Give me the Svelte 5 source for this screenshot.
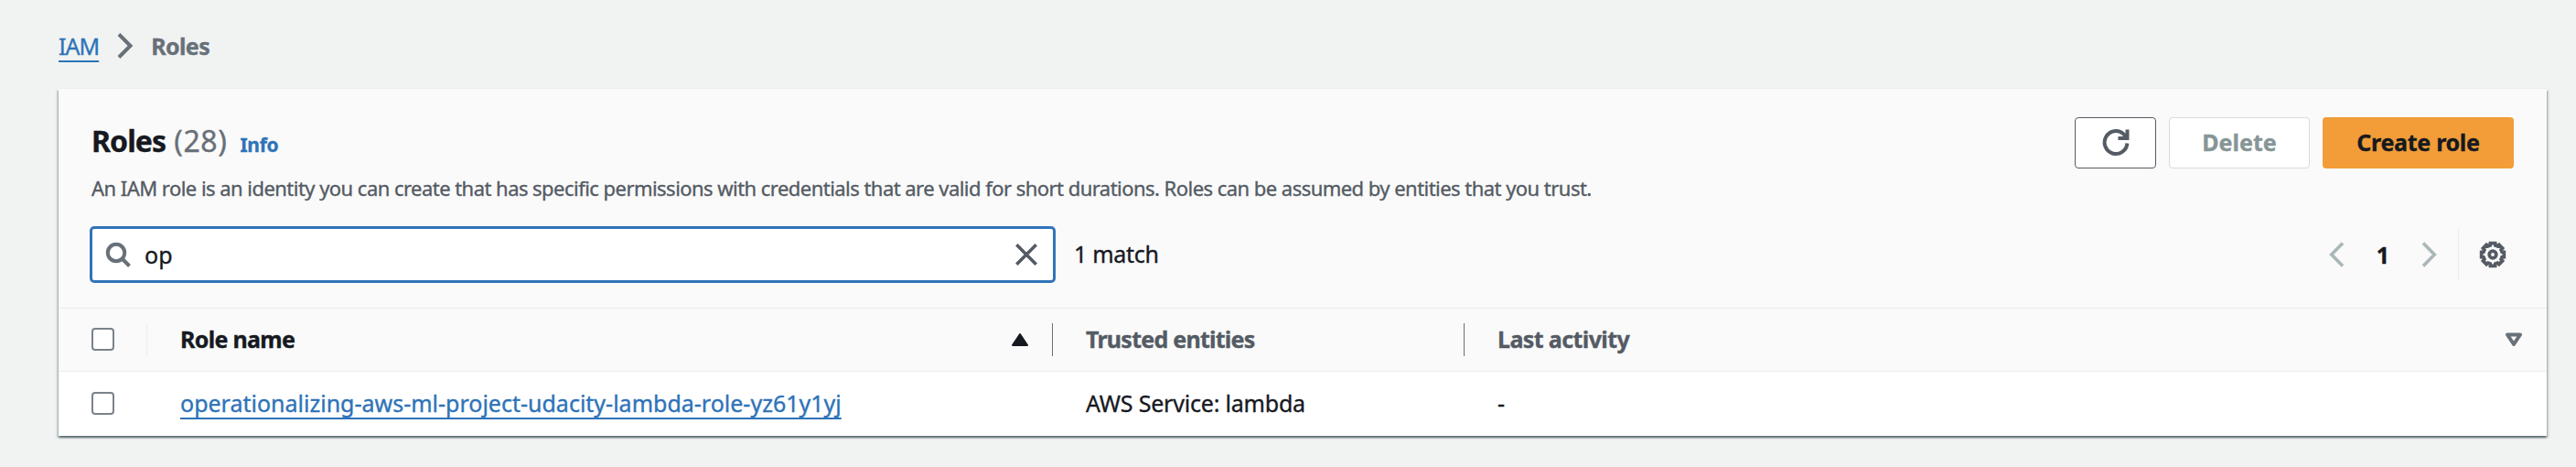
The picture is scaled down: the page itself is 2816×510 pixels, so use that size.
<script>
  const roles = [
    { name: 'operationalizing-aws-ml-project-udacity-lambda-role-yz61y1yj', trusted: 'AWS Service: lambda', activity: '-' }
  ];

  // Closed outline of an eight-toothed cog, centred in a 32-unit box.
  const cog = Array.from({ length: 8 }, (_, i) => {
    const base = (i * Math.PI) / 4 - Math.PI / 2;
    return [[-0.27, 10.5], [-0.21, 12.6], [0.21, 12.6], [0.27, 10.5]]
      .map(([a, r]) => `${(16 + r * Math.cos(base + a)).toFixed(2)} ${(16 + r * Math.sin(base + a)).toFixed(2)}`)
      .join('L');
  }).join('L');
</script>

<div class="page">
  <nav class="crumbs">
    <a class="iam" href="#iam">IAM</a>
    <svg class="sep" width="18" height="28" viewBox="0 0 18 28"><path d="M2 1.5 14.5 14 2 26.5" /></svg>
    <span class="current">Roles</span>
  </nav>

  <section class="card">
    <header>
      <div class="top">
        <div class="heading">
          <h1>Roles</h1>
          <span class="count">(28)</span>
          <a class="info" href="#info">Info</a>
        </div>
        <div class="actions">
          <button class="refresh" aria-label="Refresh">
            <svg width="32" height="32" viewBox="0 0 32 32"><path d="M28.400 16.500A12.400 12.500 0 1 1 24.500 6.400Q26.500 8.200 27.500 10.500" /><path d="M28.500 1.500v9.500H18.500" /></svg>
          </button>
          <button class="delete">Delete</button>
          <button class="create">Create role</button>
        </div>
      </div>
      <p>An IAM role is an identity you can create that has specific permissions with credentials that are valid for short durations. Roles can be assumed by entities that you trust.</p>
      <div class="tools">
        <div class="search">
          <svg width="28" height="28" viewBox="0 0 28 28"><circle cx="12" cy="12" r="9.200" /><path d="m18.500 18.500 8 8" /></svg>
          <span class="query">op</span>
          <svg class="clear" width="24" height="24" viewBox="0 0 24 24"><path d="m1.300 1.300 21.400 21.400M22.700 1.300 1.300 22.700" /></svg>
        </div>
        <span class="matches">1 match</span>
        <div class="pager">
          <svg width="17" height="28" viewBox="0 0 17 28"><path d="M15 1.500 2.700 14 15 26.500" /></svg>
          <b>1</b>
          <svg width="17" height="28" viewBox="0 0 17 28"><path d="M2 1.500 14.300 14 2 26.500" /></svg>
        </div>
        <div class="prefs">
          <svg width="32" height="32" viewBox="0 0 32 32"><path d="M{cog}Z" /><circle cx="16" cy="16" r="3.800" /></svg>
        </div>
      </div>
    </header>

    <div class="row head">
      <div class="cell pick first"><i class="box"></i></div>
      <div class="cell sorted">
        <span class="h-name">Role name</span>
        <svg width="20" height="16" viewBox="0 0 20 16"><path d="M10 2 18 14H2Z" /></svg>
      </div>
      <div class="cell"><span class="h-trust">Trusted entities</span></div>
      <div class="cell last">
        <span class="h-last">Last activity</span>
        <svg width="20" height="16" viewBox="0 0 20 16"><path d="M3 2.500h14L10 13Z" /></svg>
      </div>
    </div>
    {#each roles as role}
      <div class="row body">
        <div class="cell pick"><i class="box"></i></div>
        <div class="cell"><a class="name" href="#role">{role.name}</a></div>
        <div class="cell"><span class="trusted">{role.trusted}</span></div>
        <div class="cell last"><span>{role.activity}</span></div>
      </div>
    {/each}
  </section>
</div>

<style>
  :global(body) { background: #f1f3f3; }
  .page {
    box-sizing: border-box;
    height: 510px;
    padding: 0 32px 0 64px;
    color: #16191f;
    font: 25px/34px "Noto Sans", sans-serif;
    -webkit-text-stroke: .35px;
    overflow: hidden;
  }
  a {
    color: #2e73b8;
    text-decoration: underline 2px;
    text-underline-offset: 6px;
    text-decoration-skip-ink: none;
  }
  svg { display: block; flex: none; fill: none; }
  .crumbs { display: flex; align-items: center; height: 99px; margin-bottom: -2px; }
  .iam { letter-spacing: -1px; }
  .sep { margin: 0 19px 0 20px; stroke: #687078; stroke-width: 4; }
  .current { color: #687078; font-weight: 700; letter-spacing: -.6px; }

  .card {
    width: 2720px;
    height: 379px;
    background: #fff;
    box-shadow: 0 -1px 0 #eaeded, 0 2px 2px rgba(0,28,36,.5), 2px 2px 2px rgba(0,28,36,.15), -2px 2px 2px rgba(0,28,36,.15);
  }
  header {
    box-sizing: border-box;
    height: 239px;
    padding: 31px 36px 0 34px;
    background: #fafafa;
  }
  .top { display: flex; justify-content: space-between; height: 60px; }
  .heading { display: flex; align-items: baseline; line-height: 51px; padding-left: 2px; }
  h1 { margin: 0 9px 0 0; font-size: 32px; font-weight: 700; letter-spacing: -.9px; }
  .count { color: #687078; font-size: 32px; letter-spacing: .6px; }
  .info { margin-left: 14px; font-size: 21px; font-weight: 700; letter-spacing: -.3px; text-decoration: none; }
  .actions { display: flex; gap: 14px; height: 56px; }
  button {
    box-sizing: border-box;
    display: flex;
    align-items: center;
    justify-content: center;
    padding: 0 0 2px;
    border: 1px solid #545b64;
    border-radius: 4px;
    background: #fff;
    color: #16191f;
    font: 700 25px/34px "Noto Sans", sans-serif;
  }
  .refresh { width: 89px; padding: 0; stroke: #545b64; stroke-width: 4; }
  .delete { width: 154px; border-color: #d5dbdb; color: #879596; }
  .create { width: 209px; border: 0; background: #f29d38; letter-spacing: -.3px; }
  p { margin: 0 0 0 2px; padding-top: 1px; color: #545b64; font-size: 22px; line-height: 32px; letter-spacing: -.536px; white-space: nowrap; }
  .tools { display: flex; align-items: center; margin-top: 26px; height: 62px; }
  .search {
    box-sizing: border-box;
    display: flex;
    align-items: center;
    width: 1056px;
    height: 62px;
    padding: 0 17px 0 14px;
    border: 3px solid #3074ba;
    border-radius: 5px;
    background: #fff;
  }
  .search svg { stroke: #687078; stroke-width: 4; }
  .query { flex: 1; margin-left: 15px; }
  .search .clear { stroke: #545b64; stroke-width: 3.6; }
  .matches { margin: -2px 0 0 20px; letter-spacing: -.3px; }
  .pager { display: flex; align-items: center; gap: 35px; margin-left: auto; }
  .pager svg { stroke: #aab7b8; stroke-width: 3.6; }
  .prefs { display: flex; align-items: center; box-sizing: border-box; width: 61px; height: 56px; margin-left: 23px; padding-left: 21px; border-left: 1px solid #eaeded; }
  .prefs svg { stroke: #545b64; stroke-width: 3.8; }

  .row { display: grid; grid-template-columns: 97px 990px 450px 1fr; align-items: center; box-sizing: border-box; border-top: 1px solid #eaeded; }
  .head { height: 69px; background: #fafafa; color: #545b64; font-weight: 700; }
  .body { height: 71px; }
  .cell { display: flex; align-items: center; justify-content: space-between; box-sizing: border-box; height: 36px; padding: 0 25px 1px 36px; }
  .cell > span, .name { padding-bottom: 2px; }
  .head .cell { border-right: 1px solid #687078; }
  .head .first { border-color: #eaeded; }
  .head .last { padding-right: 26px; border: 0; }
  .sorted { color: #16191f; }
  .sorted path { fill: #16191f; stroke: #16191f; stroke-width: 2; stroke-linejoin: round; }
  .last path { stroke: #687078; stroke-width: 4; stroke-linejoin: round; }
  .h-name { letter-spacing: -.7px; }
  .h-trust { letter-spacing: -.75px; }
  .h-last { letter-spacing: -.6px; }
  .trusted { letter-spacing: -.2px; }
  .box { box-sizing: border-box; width: 25px; height: 25px; border: 2px solid #7b828a; border-radius: 4px; background: #fff; }
</style>
